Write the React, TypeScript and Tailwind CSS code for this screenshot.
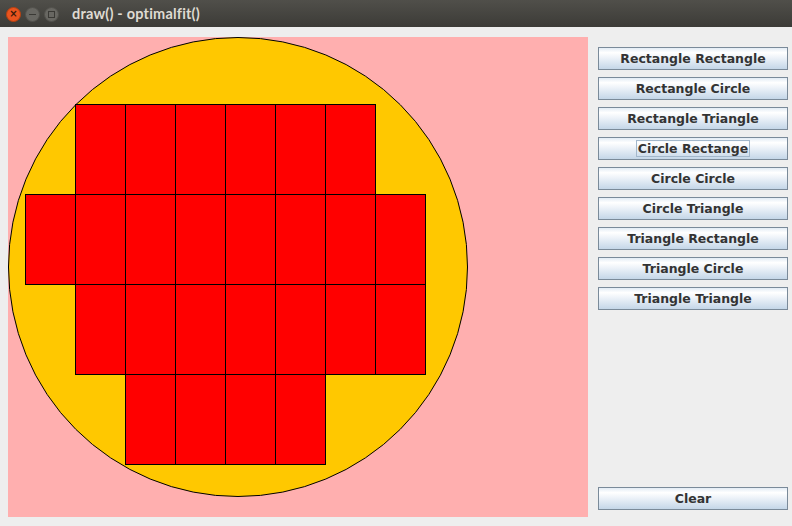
const buttons = [
  'Rectangle Rectangle',
  'Rectangle Circle',
  'Rectangle Triangle',
  'Circle Rectange',
  'Circle Circle',
  'Circle Triangle',
  'Triangle Rectangle',
  'Triangle Circle',
  'Triangle Triangle',
]

// rows of fitted rectangles: [startX, count, y] in canvas coords
const rows: [number, number, number][] = [
  [67, 6, 67],
  [17, 8, 157],
  [67, 7, 247],
  [117, 4, 337],
]

function MetalButton({ label, focused }: { label: string; focused?: boolean }) {
  return (
    <button className="h-[23px] w-full border border-[#7a8a99] bg-[linear-gradient(to_bottom,#e3ecf5_0%,#ffffff_22%,#eef3f9_45%,#c4d6e8_100%)] flex items-center justify-center text-[12.5px] font-bold text-[#333333] [font-family:'DejaVu_Sans',sans-serif]">
      <span className={focused ? 'border border-[#a3b8cc] px-[1px] leading-[15px]' : 'leading-[15px]'}>{label}</span>
    </button>
  )
}

function Canvas() {
  return (
    <svg width="580" height="480" className="block" shapeRendering="crispEdges">
      <rect x="0" y="0" width="580" height="480" fill="#ffafaf" />
      <circle cx="230" cy="230" r="229.5" fill="#ffc800" stroke="#000" strokeWidth="1" shapeRendering="auto" />
      {rows.map(([sx, n, y]) =>
        Array.from({ length: n }).map((_, i) => (
          <rect
            key={`${y}-${i}`}
            x={sx + i * 50 + 0.5}
            y={y + 0.5}
            width="50"
            height="90"
            fill="#ff0000"
            stroke="#000"
            strokeWidth="1"
          />
        ))
      )}
    </svg>
  )
}

export default function App() {
  return (
    <div className="w-[792px] h-[526px] bg-[#eeeeee] flex flex-col overflow-hidden">
      <div className="h-[27px] bg-[linear-gradient(to_bottom,#504f4a,#3c3b37)] flex items-center pl-[6px] pt-[1px]">
        <div className="flex items-center gap-[4px]">
          <div className="w-[15px] h-[15px] rounded-full bg-[#e9541f] border border-[#b8400f] flex items-center justify-center text-[10px] leading-none text-[#3a1a0a] font-bold [font-family:'DejaVu_Sans',sans-serif]">×</div>
          <div className="w-[15px] h-[15px] rounded-full bg-[#686762] border border-[#52514c] flex items-center justify-center">
            <div className="w-[7px] h-[1px] bg-[#3a3935]" />
          </div>
          <div className="w-[15px] h-[15px] rounded-full bg-[#686762] border border-[#52514c] flex items-center justify-center">
            <div className="w-[7px] h-[7px] border border-[#3a3935]" />
          </div>
        </div>
        <span className="ml-[13px] text-[#dfdbd2] text-[14.5px] font-bold [font-variant-ligatures:none] tracking-[0.2px] [font-family:Lato,sans-serif]">draw() - optimalfit()</span>
      </div>
      <div className="flex pl-[8px] pt-[10px] gap-[10px]">
        <Canvas />
        <div className="w-[190px] h-[480px] flex flex-col pt-[10px] pb-[7px]">
          <div className="flex flex-col gap-[7px]">
            {buttons.map((b) => (
              <MetalButton key={b} label={b} focused={b === 'Circle Rectange'} />
            ))}
          </div>
          <div className="flex-1" />
          <MetalButton label="Clear" />
        </div>
      </div>
    </div>
  )
}
